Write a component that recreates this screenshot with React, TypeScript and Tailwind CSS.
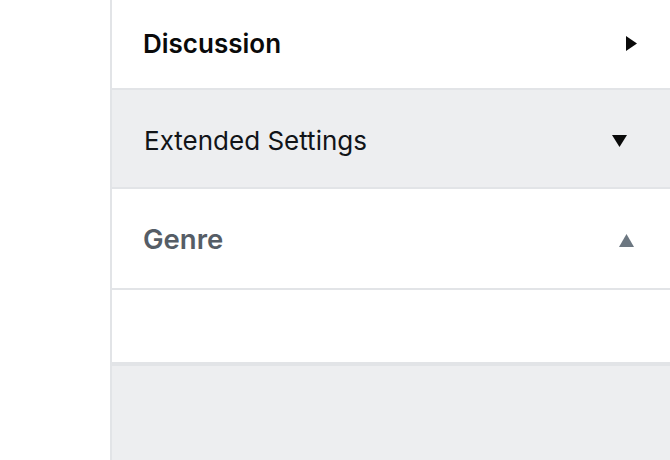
import React from "react";

const font = { fontFamily: "Inter, 'Noto Sans', sans-serif" };

function Caret({ dir, color }: { dir: "right" | "down" | "up"; color: string }) {
  if (dir === "right") {
    return (
      <svg width="11" height="15" viewBox="0 0 11 15">
        <polygon points="0,0 11,7.5 0,15" fill={color} />
      </svg>
    );
  }
  if (dir === "down") {
    return (
      <svg width="15" height="12" viewBox="0 0 15 12">
        <polygon points="0,0 15,0 7.5,12" fill={color} />
      </svg>
    );
  }
  return (
    <svg width="15" height="13" viewBox="0 0 15 13">
      <polygon points="7.5,0 15,13 0,13" fill={color} />
    </svg>
  );
}

export default function App() {
  return (
    <div className="flex h-[460px] w-[670px] overflow-hidden bg-white" style={font}>
      <div className="w-[110px] shrink-0 bg-white" />
      <div className="flex flex-1 flex-col border-l-2 border-[#e2e4e7]">
        <div className="flex h-[90px] shrink-0 items-center justify-between border-b-2 border-[#e2e4e7] bg-white pb-[1px] pl-[31px] pr-[33px]">
          <span className="text-[26px] font-semibold text-[#0a0a0a]">Discussion</span>
          <Caret dir="right" color="#0a0a0a" />
        </div>
        <div className="flex h-[99px] shrink-0 items-center justify-between border-b-2 border-[#e2e4e7] bg-[#edeef0] pl-[32px] pr-[43px] pt-[4px]">
          <span className="text-[26px] text-[#111418]">Extended Settings</span>
          <Caret dir="down" color="#0a0a0a" />
        </div>
        <div className="flex h-[101px] shrink-0 items-center justify-between border-b-2 border-[#e2e4e7] bg-white pl-[31px] pr-[36px] pt-[3px]">
          <span className="text-[27.5px] font-semibold text-[#555d66]">Genre</span>
          <Caret dir="up" color="#6c7781" />
        </div>
        <div className="h-[76px] shrink-0 border-b-4 border-[#e2e4e7] bg-white" />
        <div className="flex-1 bg-[#edeef0]" />
      </div>
    </div>
  );
}
